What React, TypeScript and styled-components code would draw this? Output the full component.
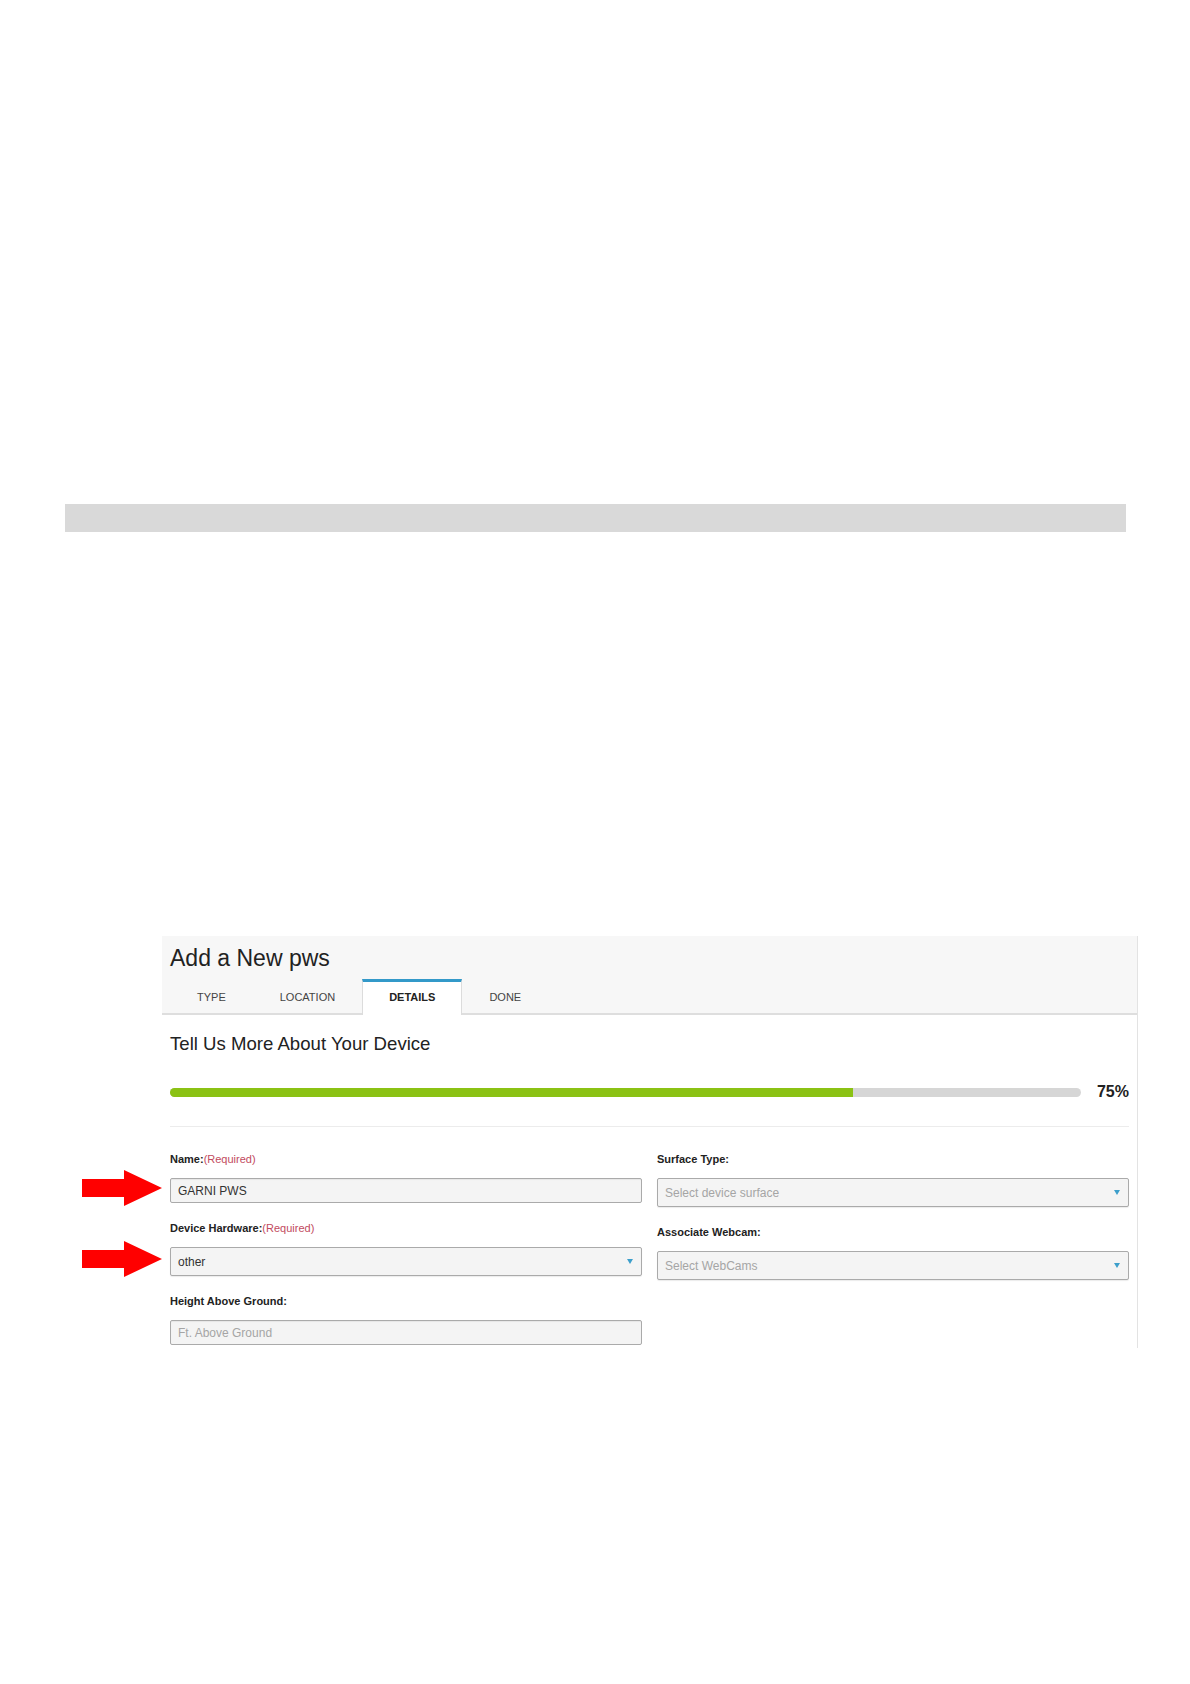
import React from "react";
import styled, { createGlobalStyle } from "styled-components";

const GlobalStyle = createGlobalStyle`
  body {
    margin: 0;
    background: #ffffff;
    font-family: "Liberation Sans", Arial, sans-serif;
  }
`;

type Field = {
  label: string;
  required?: boolean;
  kind: "input" | "select";
  value?: string;
  placeholder?: string;
  marked?: boolean;
};

const leftFields: Field[] = [
  { label: "Name:", required: true, kind: "input", value: "GARNI PWS", marked: true },
  { label: "Device Hardware:", required: true, kind: "select", value: "other", marked: true },
  { label: "Height Above Ground:", kind: "input", placeholder: "Ft. Above Ground" },
];

const rightFields: Field[] = [
  { label: "Surface Type:", kind: "select", placeholder: "Select device surface" },
  { label: "Associate Webcam:", kind: "select", placeholder: "Select WebCams" },
];

const tabs = ["TYPE", "LOCATION", "DETAILS", "DONE"];

const RedArrow = () => (
  <ArrowMark width="80" height="36" viewBox="0 0 80 36">
    <polygon points="0,9 42,9 42,0 80,18 42,36 42,27 0,27" fill="#ff0000" />
  </ArrowMark>
);

const Caret = () => (
  <svg width="6" height="5" viewBox="0 0 6 5">
    <polygon points="0,0 6,0 3,5" fill="#3d9fcb" />
  </svg>
);

const FieldBlock = ({ field }: { field: Field }) => (
  <FieldGroup>
    <Label>
      {field.label}
      {field.required && <Required>(Required)</Required>}
    </Label>
    <ControlWrap>
      {field.marked && <RedArrow />}
      {field.kind === "input" ? (
        <TextBox $empty={!field.value}>{field.value || field.placeholder}</TextBox>
      ) : (
        <SelectBox $empty={!field.value}>
          <span>{field.value || field.placeholder}</span>
          <Caret />
        </SelectBox>
      )}
    </ControlWrap>
  </FieldGroup>
);

const App: React.FunctionComponent = () => {
  const progress = 75;

  return (
    <Page>
      <GlobalStyle />
      <GrayBar />
      <Panel>
        <Header>
          <Title>Add a New pws</Title>
          <TabRow>
            {tabs.map((t) => (
              <Tab key={t} $active={t === "DETAILS"}>
                {t}
              </Tab>
            ))}
          </TabRow>
        </Header>
        <Content>
          <SectionTitle>Tell Us More About Your Device</SectionTitle>
          <ProgressRow>
            <Track>
              <Fill style={{ width: `${progress}%` }} />
            </Track>
            <Percent>{progress}%</Percent>
          </ProgressRow>
          <Divider />
          <Columns>
            <Column>
              {leftFields.map((f) => (
                <FieldBlock key={f.label} field={f} />
              ))}
            </Column>
            <Column>
              {rightFields.map((f) => (
                <FieldBlock key={f.label} field={f} />
              ))}
            </Column>
          </Columns>
        </Content>
      </Panel>
    </Page>
  );
};

export default App;

const Page = styled.div`
  width: 1190px;
  min-height: 1684px;
  padding-top: 504px;
  box-sizing: border-box;
`;

const GrayBar = styled.div`
  margin-left: 65px;
  width: 1061px;
  height: 28px;
  background: #d9d9d9;
`;

const Panel = styled.section`
  margin: 404px 0 0 162px;
  width: 976px;
  box-sizing: border-box;
  border-right: 1px solid #e3e3e3;
`;

const Header = styled.div`
  background: #f7f7f7;
  padding: 8px 0 0 8px;
  border-bottom: 2px solid #dedede;
`;

const Title = styled.h1`
  margin: 0 0 7px;
  font-size: 23px;
  line-height: 28px;
  font-weight: normal;
  color: #222;
`;

const TabRow = styled.div`
  display: flex;
  align-items: flex-end;
  height: 34px;
`;

const Tab = styled.div<{ $active?: boolean }>`
  height: 36px;
  box-sizing: border-box;
  padding: 0 26px 3px;
  margin-bottom: -2px;
  display: flex;
  align-items: center;
  font-size: 11px;
  color: ${(p) => (p.$active ? "#222" : "#444")};
  font-weight: ${(p) => (p.$active ? "bold" : "normal")};
  background: ${(p) => (p.$active ? "#ffffff" : "transparent")};
  border-top: 3px solid ${(p) => (p.$active ? "#3399c9" : "transparent")};
  border-left: 1px solid ${(p) => (p.$active ? "#dcdcdc" : "transparent")};
  border-right: 1px solid ${(p) => (p.$active ? "#dcdcdc" : "transparent")};
`;

const Content = styled.div`
  padding: 18px 8px 3px;
`;

const SectionTitle = styled.h2`
  margin: 0 0 27px;
  font-size: 18.6px;
  line-height: 22px;
  font-weight: normal;
  color: #222;
`;

const ProgressRow = styled.div`
  display: flex;
  align-items: center;
  gap: 16px;
  height: 20px;
`;

const Track = styled.div`
  flex: 1;
  height: 9px;
  border-radius: 5px;
  background: #d6d6d6;
  overflow: hidden;
`;

const Fill = styled.div`
  height: 100%;
  background: #8bc214;
`;

const Percent = styled.span`
  font-size: 16px;
  font-weight: bold;
  line-height: 20px;
  color: #222;
`;

const Divider = styled.hr`
  margin: 24px 0 0;
  border: 0;
  border-top: 1px solid #ececec;
`;

const Columns = styled.div`
  display: grid;
  grid-template-columns: 1fr 1fr;
  column-gap: 15px;
  padding-top: 25px;
`;

const Column = styled.div`
  display: flex;
  flex-direction: column;
  gap: 18px;
`;

const FieldGroup = styled.div`
  display: flex;
  flex-direction: column;
`;

const Label = styled.label`
  font-size: 11px;
  line-height: 14px;
  font-weight: bold;
  color: #222;
  margin-bottom: 12px;
`;

const Required = styled.span`
  font-weight: normal;
  color: #c24a5e;
`;

const ControlWrap = styled.div`
  position: relative;
`;

const ArrowMark = styled.svg`
  position: absolute;
  right: calc(100% + 8px);
  top: calc(50% - 21px);
`;

const TextBox = styled.div<{ $empty?: boolean }>`
  height: 25px;
  box-sizing: border-box;
  padding: 0 7px;
  display: flex;
  align-items: center;
  font-size: 12px;
  color: ${(p) => (p.$empty ? "#a5a5a5" : "#333")};
  background: #f4f4f4;
  border: 1px solid #aaaaaa;
  border-radius: 2px;
  box-shadow: inset 0 1px 1px rgba(0, 0, 0, 0.06);
`;

const SelectBox = styled.div<{ $empty?: boolean }>`
  height: 29px;
  box-sizing: border-box;
  padding: 0 8px 0 7px;
  display: flex;
  align-items: center;
  justify-content: space-between;
  font-size: 12px;
  color: ${(p) => (p.$empty ? "#a5a5a5" : "#333")};
  background: #f4f4f4;
  border: 1px solid #aaaaaa;
  border-radius: 2px;
  box-shadow: 0 1px 1px rgba(0, 0, 0, 0.08);
`;
